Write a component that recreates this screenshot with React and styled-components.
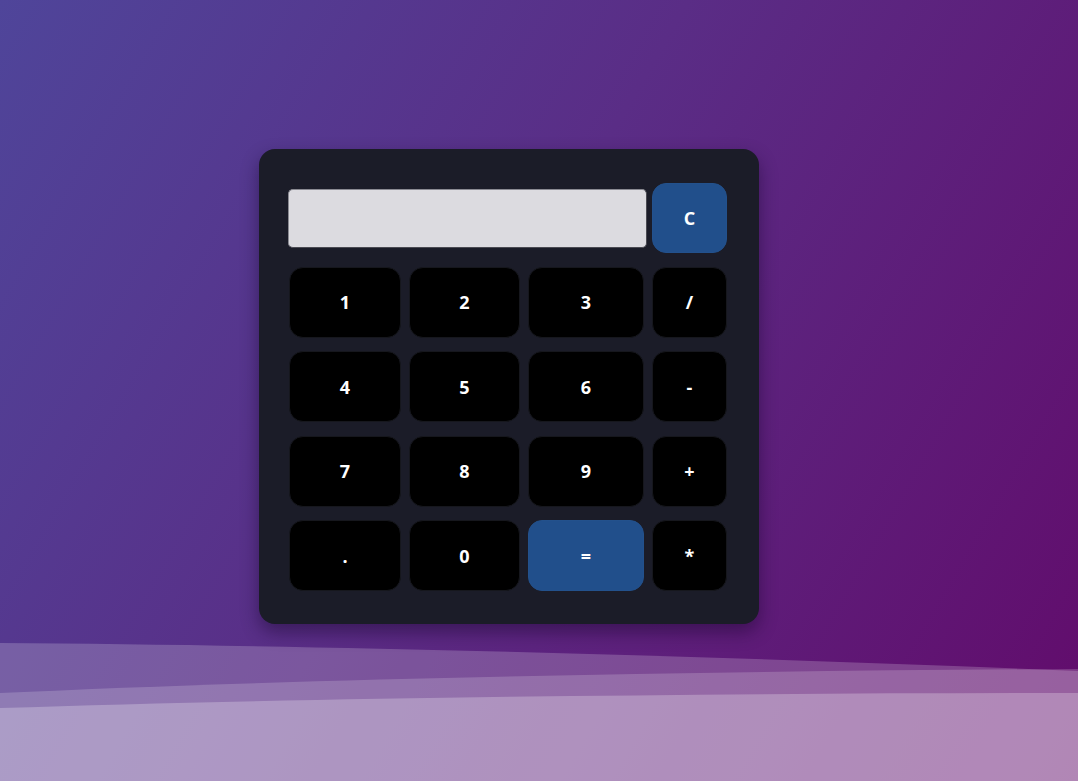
import React, { useState } from "react";
import styled, { createGlobalStyle } from "styled-components";

const GlobalStyle = createGlobalStyle`
  html, body {
    margin: 0;
    padding: 0;
  }
  body {
    font-family: "Open Sans", "Liberation Sans", sans-serif;
    background: linear-gradient(120deg, #4f459a 0%, #5a2d86 45%, #620b6b 100%);
    min-height: 100vh;
    overflow: hidden;
  }
`;

const Page = styled.div`
  position: relative;
  height: 781px;
  padding: 149px 0 0 259px;
  box-sizing: border-box;
`;

const Waves = styled.svg`
  position: absolute;
  left: 0;
  bottom: 0;
  width: 100%;
  height: 140px;
  z-index: 0;
`;

const Card = styled.div`
  position: relative;
  z-index: 1;
  width: 500px;
  height: 475px;
  box-sizing: border-box;
  padding: 34px 31px 33px 30px;
  background: #1b1c28;
  border-radius: 16px;
  box-shadow: 0 8px 18px rgba(20, 5, 40, 0.45);
`;

const Keys = styled.div`
  display: grid;
  grid-template-columns: 112px 111px 116px 75px;
  grid-template-rows: 70px repeat(4, 71px);
  column-gap: 8px;
  row-gap: 13.5px;
`;

const Display = styled.input`
  grid-column: 1 / span 3;
  align-self: center;
  margin-left: -1px;
  margin-right: -3px;
  height: 59px;
  box-sizing: border-box;
  border: 1px solid #8a8a92;
  border-bottom-color: #4a4a52;
  border-right-color: #4a4a52;
  border-radius: 5px;
  background: #dcdbe0;
  font-family: inherit;
  font-size: 22px;
  padding: 0 12px;
  outline: none;
`;

const Key = styled.button`
  display: flex;
  align-items: center;
  justify-content: center;
  border: 1px solid ${p => (p.$accent ? "#23518c" : "#16171d")};
  border-radius: 14px;
  background: ${p => (p.$accent ? "#214f8b" : "#000")};
  color: #fff;
  font-family: "Open Sans", "Liberation Sans", sans-serif;
  font-weight: 700;
  font-size: 18px;
  cursor: pointer;
  padding: 0;
`;

const rows = [
  ["1", "2", "3", "/"],
  ["4", "5", "6", "-"],
  ["7", "8", "9", "+"],
  [".", "0", "=", "*"],
];

export default function App() {
  const [value, setValue] = useState("");

  const press = k => {
    if (k === "=") {
      try {
        // eslint-disable-next-line no-new-func
        setValue(String(Function(`return (${value})`)()));
      } catch (e) {
        setValue("Error");
      }
      return;
    }
    setValue(v => v + k);
  };

  return (
    <>
      <GlobalStyle />
      <Page>
        <Waves viewBox="0 0 1078 140" preserveAspectRatio="none">
          <path d="M0 2 C 300 4, 700 14, 1078 30 L1078 140 L0 140 Z" fill="rgba(255,255,255,0.2)" />
          <path d="M0 52 C 300 38, 700 30, 1078 28 L1078 140 L0 140 Z" fill="rgba(255,255,255,0.18)" />
          <path d="M0 67 C 300 57, 700 52, 1078 52 L1078 140 L0 140 Z" fill="rgba(255,255,255,0.25)" />
        </Waves>
        <Card>
          <Keys>
            <Display value={value} onChange={e => setValue(e.target.value)} />
            <Key $accent onClick={() => setValue("")}>C</Key>
            {rows.flat().map(k => (
              <Key key={k} $accent={k === "="} onClick={() => press(k)}>
                {k}
              </Key>
            ))}
          </Keys>
        </Card>
      </Page>
    </>
  );
}
